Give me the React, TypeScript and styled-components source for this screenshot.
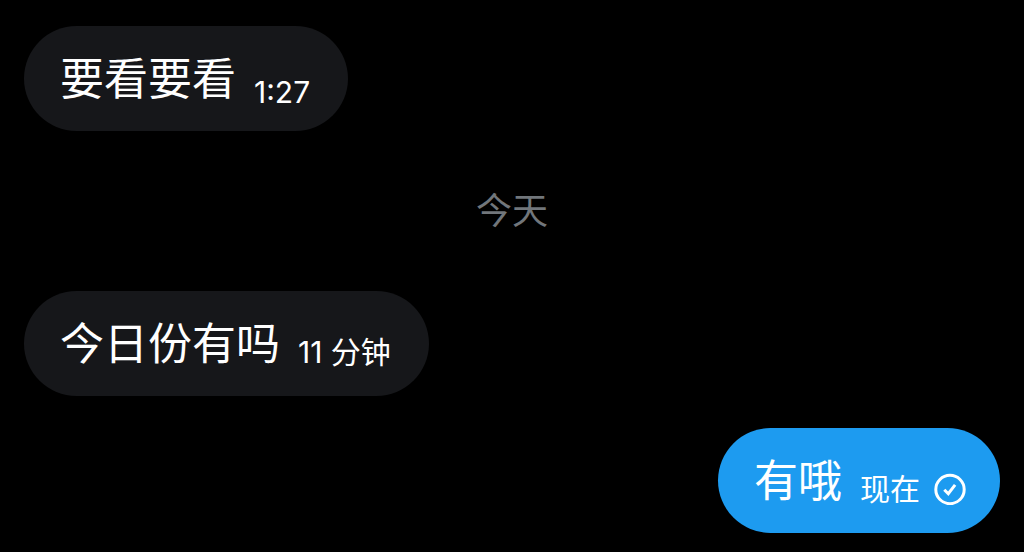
import React from "react";
import styled, { createGlobalStyle } from "styled-components";

const GlobalStyle = createGlobalStyle`
  * { box-sizing: border-box; }
  body {
    margin: 0;
    background: #000;
    color: #fff;
    font-family: Inter, "Noto Sans CJK SC", sans-serif;
  }
`;

const Conversation = styled.main`
  display: flex;
  flex-direction: column;
  gap: 32px;
  padding: 26px 24px 19px;
`;

const Bubble = styled.article<{ $own?: boolean }>`
  display: flex;
  align-items: flex-end;
  align-self: ${({ $own }) => ($own ? "flex-end" : "flex-start")};
  gap: 18px;
  min-height: 105px;
  padding: 18px ${({ $own }) => ($own ? "34px" : "38px")} 20px 36px;
  border-radius: 53px;
  background: ${({ $own }) => ($own ? "#1d9bf0" : "#16171a")};
`;

const Message = styled.p`
  margin: 0;
  font-size: 44px;
  line-height: 64px;
  white-space: nowrap;
`;

const Stamp = styled.time<{ $numeric?: boolean }>`
  font-size: 30px;
  line-height: ${({ $numeric }) => ($numeric ? "38px" : "48px")};
  white-space: nowrap;
`;

const Status = styled.span`
  display: flex;
  align-items: center;
  gap: 14px;
`;

const DayLabel = styled.h2`
  margin: 28px 0;
  color: #71767b;
  font-size: 36px;
  font-weight: 400;
  line-height: 40px;
  text-align: center;
`;

const SentIcon = styled.svg`
  width: 32px;
  height: 32px;
`;

export default function App() {
  return (
    <>
      <GlobalStyle />
      <Conversation lang="zh-CN">
        <Bubble>
          <Message>要看要看</Message>
          <Stamp $numeric>1:27</Stamp>
        </Bubble>
        <DayLabel>今天</DayLabel>
        <Bubble>
          <Message>今日份有吗</Message>
          <Stamp>11 分钟</Stamp>
        </Bubble>
        <Bubble $own>
          <Message>有哦</Message>
          <Status>
            <Stamp>现在</Stamp>
            <SentIcon viewBox="0 0 32 32" fill="none" stroke="#fff" strokeWidth="3" role="img" aria-label="已发送">
              <circle cx="16" cy="16.5" r="14.2" />
              <path d="M10.3 16.7l4 4 6.8-8.8" />
            </SentIcon>
          </Status>
        </Bubble>
      </Conversation>
    </>
  );
}
